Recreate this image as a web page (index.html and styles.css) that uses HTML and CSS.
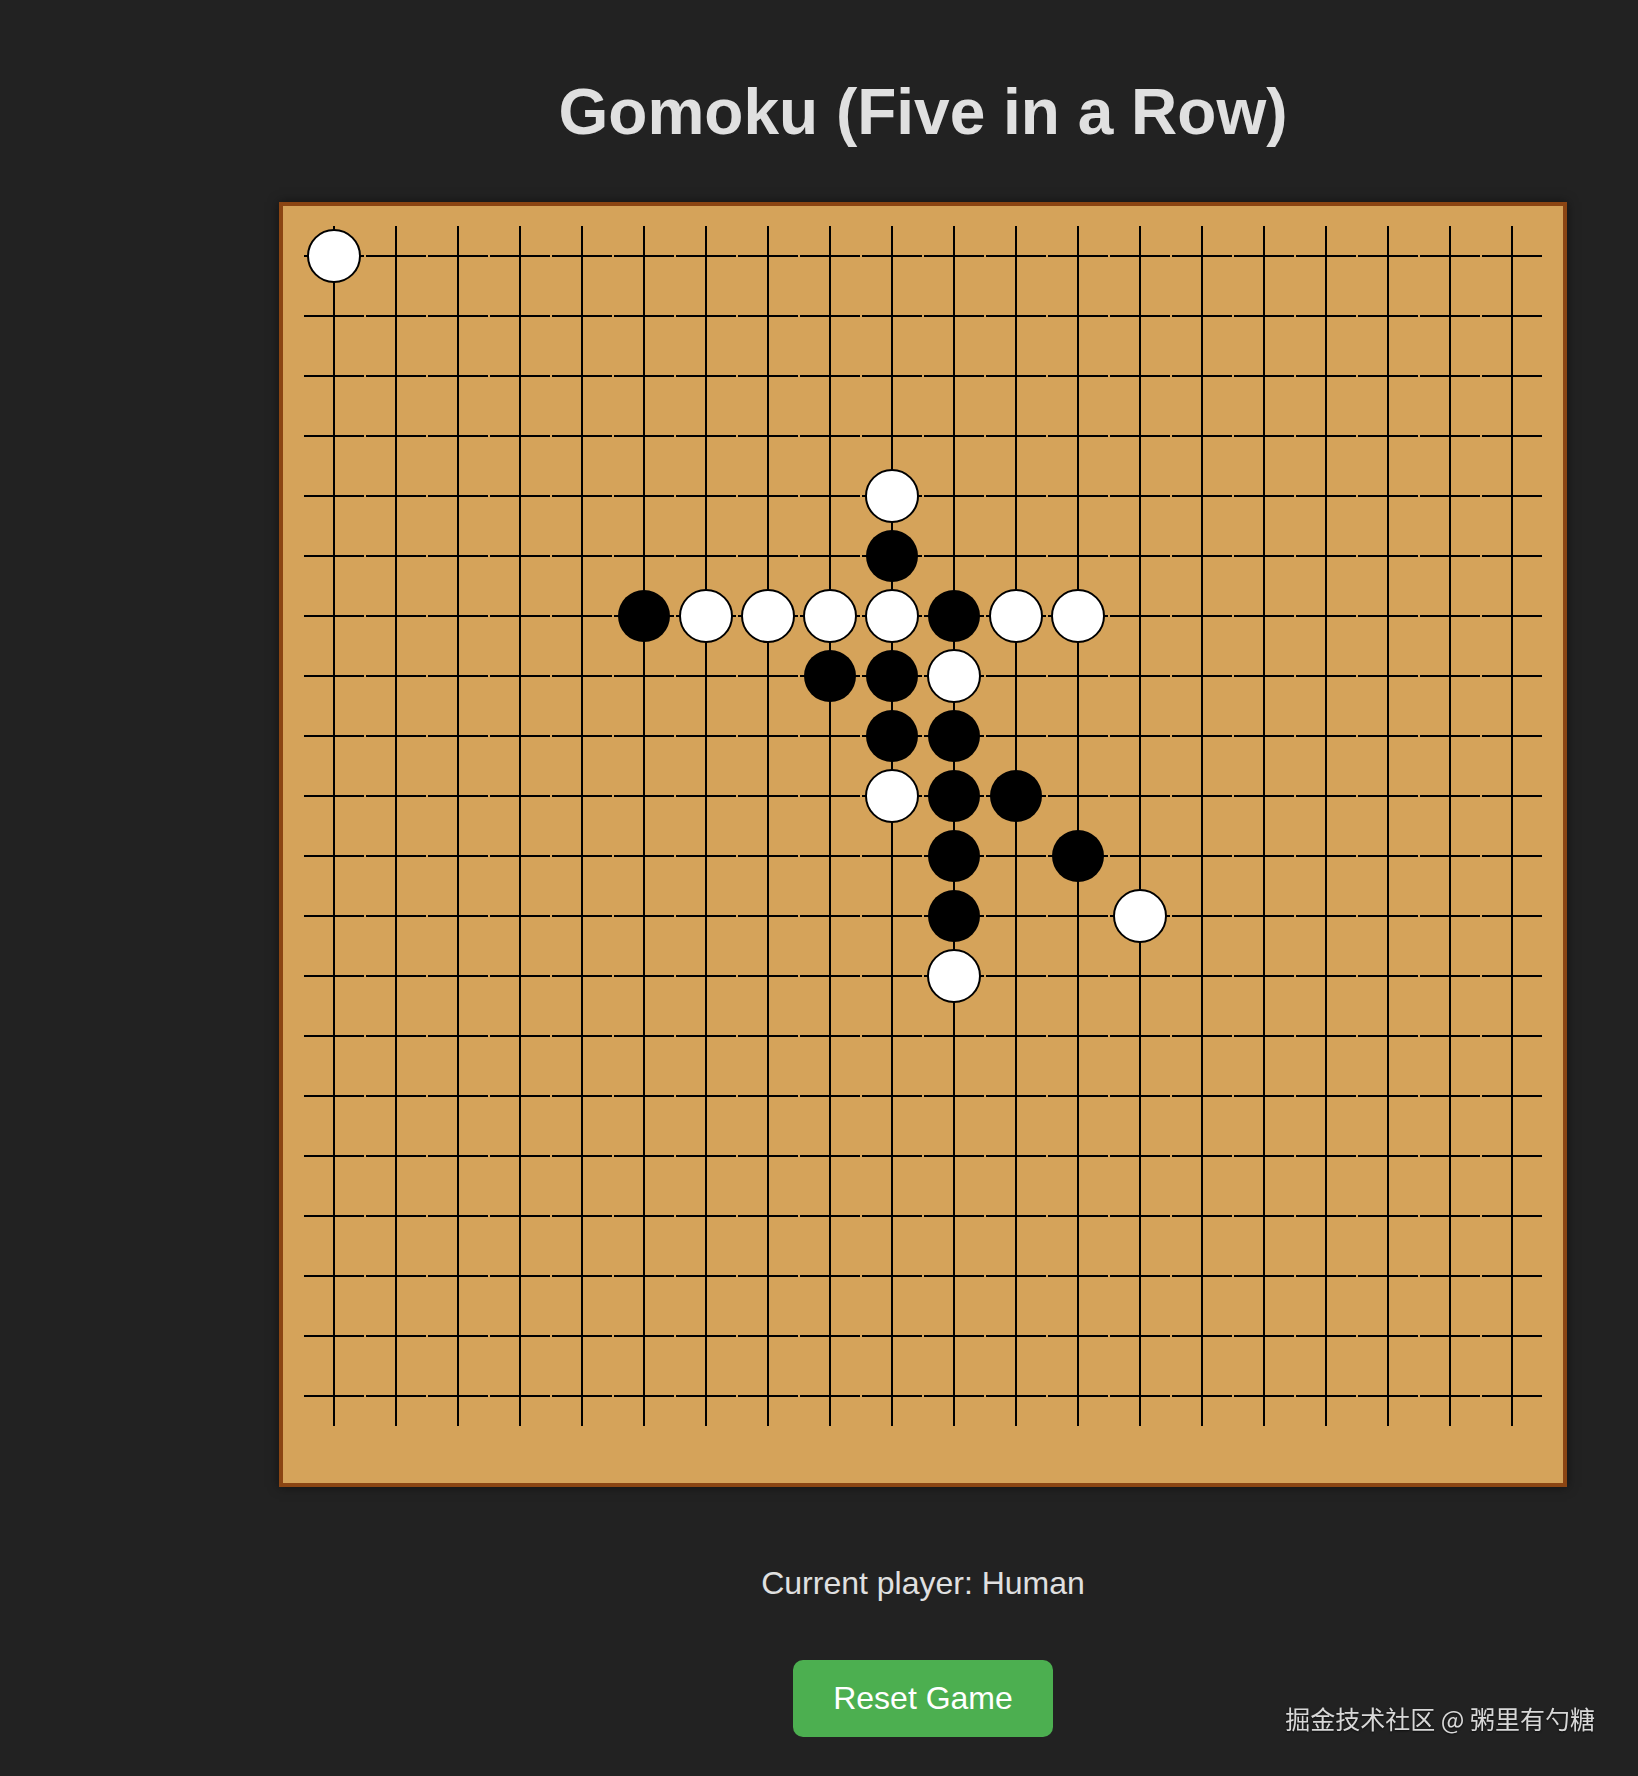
FILE: index.html
```html
<html>
<head>
    <meta charset="utf-8">
    <title>Gomoku</title>
    <link rel="stylesheet" href="styles.css">
</head>

<body>

<div class="game">
    <h1>Gomoku (Five in a Row)</h1>
    <div class="board" id="board"></div>
    <div class="status" id="status">Current player: Human</div>
    <button class="reset" id="reset">Reset Game</button>
</div>

<div class="watermark">掘金技术社区 @ 粥里有勺糖</div>

<script>
    var SIZE = 20;

    // [row, col, color]
    var moves = [
        [0, 0, "white"],
        [4, 9, "white"], [5, 9, "black"],
        [6, 5, "black"], [6, 6, "white"], [6, 7, "white"], [6, 8, "white"],
        [6, 9, "white"], [6, 10, "black"], [6, 11, "white"], [6, 12, "white"],
        [7, 8, "black"], [7, 9, "black"], [7, 10, "white"],
        [8, 9, "black"], [8, 10, "black"],
        [9, 9, "white"], [9, 10, "black"], [9, 11, "black"],
        [10, 10, "black"], [10, 12, "black"],
        [11, 10, "black"], [11, 13, "white"],
        [12, 10, "white"]
    ];

    var board = document.getElementById("board");
    var cells = [];

    for (let r = 0; r < SIZE; r++)
    {
        for (let c = 0; c < SIZE; c++)
        {
            let cell = document.createElement("div");
            cell.className = "cell";
            board.appendChild(cell);
            cells.push(cell);
        }
    }

    moves.forEach(function(m)
    {
        let stone = document.createElement("div");
        stone.className = "stone " + m[2];
        cells[m[0] * SIZE + m[1]].appendChild(stone);
    });
</script>

</body>
</html>
```

FILE: styles.css
```css
body { margin: 0; background: #222; font-family: "Liberation Sans", Arial, sans-serif; }

.game { width: 1288px; margin-left: 279px; display: flex; flex-direction: column; align-items: center; }

h1 { font-size: 64px; font-weight: bold; color: #e0e0e0; margin: 75px 0 53px; }

.board {
    display: grid;
    grid-template-columns: repeat(20, 62px);
    grid-auto-rows: 60px;
    align-content: start;
    width: 1240px;
    height: 1237px;
    padding: 20px;
    background: #d5a35a;
    border: 4px solid #8b4513;
    box-shadow: 0 0 10px rgba(0, 0, 0, 0.5);
}

.cell { position: relative; display: grid; place-items: center; }
.cell::before { content: ""; position: absolute; left: 1px; right: 1px; top: 29px; height: 2px; background: #000; }
.cell::after { content: ""; position: absolute; top: 0; bottom: 0; left: 30px; width: 2px; background: #000; }

.stone { position: relative; z-index: 1; border-radius: 50%; box-sizing: border-box; }
.stone.black { width: 52px; height: 52px; background: #000; }
.stone.white { width: 54px; height: 54px; background: #fff; border: 2px solid #000; }

.status { font-size: 32px; color: #e0e0e0; margin-top: 78px; }

.reset {
    margin-top: 58px;
    padding: 20px 40px;
    font-family: inherit;
    font-size: 32px;
    color: #fff;
    background: #4caf50;
    border: 0;
    border-radius: 10px;
}

.watermark {
    position: fixed;
    right: 43px;
    bottom: 40px;
    font-family: "Noto Sans CJK SC", sans-serif;
    font-size: 25px;
    color: #d8d8d8;
    text-shadow: 0 1px 2px rgba(0, 0, 0, 0.6);
}
```
